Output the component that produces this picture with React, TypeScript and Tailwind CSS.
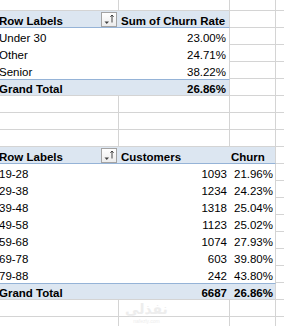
import React from "react";

type Kind = "empty" | "head" | "body" | "total";
type Cell = {
  kind: Kind;
  text?: string;
  right?: boolean;
  edge?: boolean;
  filter?: boolean;
};

const COLS = ["w-[119px]", "w-[111px]", "w-[46px]", "w-[8px]"];
const PADL = ["pl-0", "pl-[2px]", "pl-[1px]", "pl-0"];
const PADR = ["pr-0", "pr-[3px]", "pr-[2px]", "pr-0"];

function FilterButton() {
  return (
    <div className="ml-auto mr-[2px] -mt-[1px] w-[16px] h-[15px] shrink-0 border border-[#a3a3a3] bg-gradient-to-b from-white to-[#ececec]">
      <svg width="14" height="13" viewBox="0 0 14 13">
        <path d="M2.5 8.5 L7 8.5 L4.75 11 Z" fill="#404040" />
        <path d="M10 2 L10 9.5" stroke="#404040" strokeWidth="1" />
        <path d="M8.4 3.8 L10 2 L11.6 3.8" stroke="#404040" strokeWidth="1" fill="none" />
      </svg>
    </div>
  );
}

function CellView({ c, i, h }: { c: Cell; i: number; h: string }) {
  let cls = "";
  if (c.kind === "empty") {
    cls = "bg-white border-b border-[#d4d4d4] pt-[2px] " + (i < 3 ? "border-r" : "");
  } else if (c.kind === "head") {
    cls = "bg-[#dce6f1] border-b border-b-[#95b3d7] pt-[2px] font-bold " + (c.edge ? "border-r border-r-[#d4d4d4]" : "");
  } else if (c.kind === "body") {
    cls = "bg-white pt-[2px] " + (c.edge ? "border-r border-r-[#d4d4d4]" : "");
  } else {
    cls =
      "bg-[#dce6f1] border-t border-t-[#95b3d7] border-b border-b-[#d4d4d4] pt-[1px] font-bold " +
      (c.edge ? "border-r border-r-[#d4d4d4]" : "");
  }
  return (
    <div
      className={`${COLS[i]} ${h} box-border overflow-hidden shrink-0 flex ${
        c.right ? "justify-end" : "justify-start"
      } ${PADL[i]} ${PADR[i]} ${cls}`}
    >
      {c.text !== undefined && (
        <span className={`leading-[16px] whitespace-nowrap ${i === 0 ? "-ml-[1px]" : ""}`}>{c.text}</span>
      )}
      {c.filter && <FilterButton />}
    </div>
  );
}

function Row({ cells, h = "h-[17px]" }: { cells: Cell[]; h?: string }) {
  return (
    <div className="flex">
      {cells.map((c, i) => (
        <CellView key={i} c={c} i={i} h={h} />
      ))}
    </div>
  );
}

const E: Cell = { kind: "empty" };
const emptyRow: Cell[] = [E, E, E, E];

const topData: [string, string][] = [
  ["Under 30", "23.00%"],
  ["Other", "24.71%"],
  ["Senior", "38.22%"],
];

const bottomData: [string, string, string][] = [
  ["19-28", "1093", "21.96%"],
  ["29-38", "1234", "24.23%"],
  ["39-48", "1318", "25.04%"],
  ["49-58", "1123", "25.02%"],
  ["59-68", "1074", "27.93%"],
  ["69-78", "603", "39.80%"],
  ["79-88", "242", "43.80%"],
];

export default function App() {
  return (
    <div className="relative w-[284px] h-[326px] overflow-hidden bg-white text-black text-[11.5px] font-['Liberation_Sans',Arial,sans-serif]">
      <Row cells={emptyRow} h="h-[11px]" />
      <Row
        cells={[
          { kind: "head", text: "Row Labels", filter: true },
          { kind: "head", text: "Sum of Churn Rate", edge: true },
          E,
          E,
        ]}
      />
      {topData.map(([a, b]) => (
        <Row key={a} cells={[{ kind: "body", text: a }, { kind: "body", text: b, right: true, edge: true }, E, E]} />
      ))}
      <Row
        cells={[
          { kind: "total", text: "Grand Total" },
          { kind: "total", text: "26.86%", right: true, edge: true },
          E,
          E,
        ]}
      />
      <Row cells={emptyRow} />
      <Row cells={emptyRow} />
      <Row cells={emptyRow} />
      <Row
        cells={[
          { kind: "head", text: "Row Labels", filter: true },
          { kind: "head", text: "Customers" },
          { kind: "head", text: "Churn", edge: true },
          E,
        ]}
      />
      {bottomData.map(([a, b, c]) => (
        <Row
          key={a}
          cells={[
            { kind: "body", text: a },
            { kind: "body", text: b, right: true },
            { kind: "body", text: c, right: true, edge: true },
            E,
          ]}
        />
      ))}
      <Row
        cells={[
          { kind: "total", text: "Grand Total" },
          { kind: "total", text: "6687", right: true },
          { kind: "total", text: "26.86%", right: true, edge: true },
          E,
        ]}
      />
      <Row cells={emptyRow} />
      <Row cells={emptyRow} />

      <div className="absolute left-[125px] top-[302px] flex flex-col items-center gap-[2px] opacity-60 pointer-events-none">
        <span className="text-[14px] leading-[15px] font-bold text-[#e2e2e2] font-['DejaVu_Sans',sans-serif]">نفذلي</span>
        <span className="text-[5px] leading-[5px] text-[#e2e2e2] font-['Liberation_Sans',sans-serif]">nafezly.com</span>
      </div>
    </div>
  );
}
